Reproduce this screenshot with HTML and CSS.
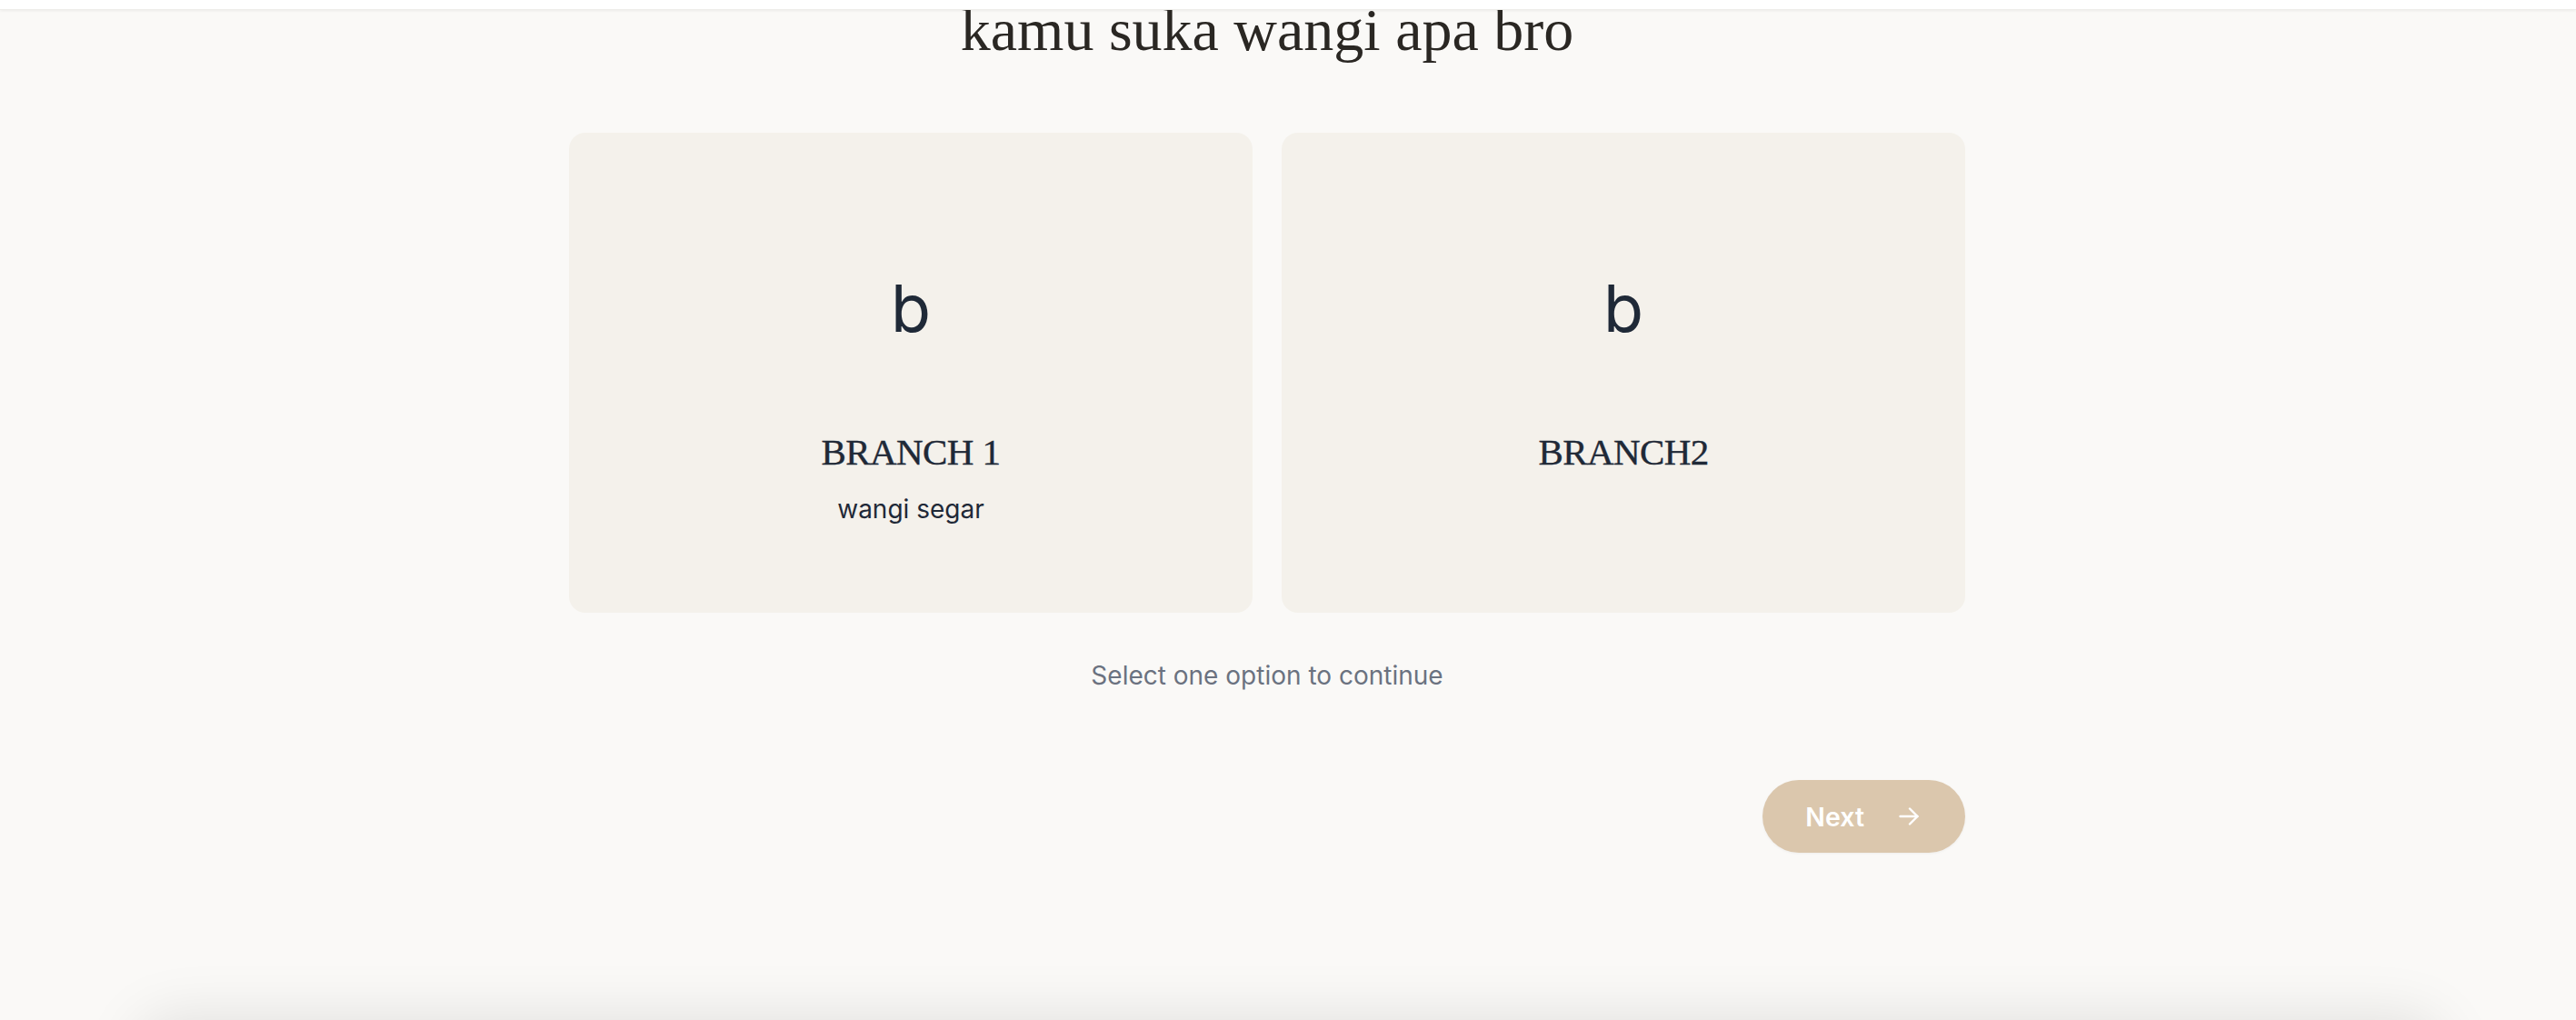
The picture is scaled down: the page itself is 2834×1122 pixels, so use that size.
FILE: index.html
```html
<!DOCTYPE html>
<html lang="id">
<head>
<meta charset="utf-8">
<title>Quiz</title>
<link rel="stylesheet" href="styles.css">
</head>
<body>
<header class="topbar"></header>
<div class="page">
  <main class="quiz">
    <h1 class="question">kamu suka wangi apa bro</h1>
    <div class="options">
      <button class="option" type="button">
        <span class="option-icon">b</span>
        <span class="option-name">BRANCH 1</span>
        <span class="option-desc">wangi segar</span>
      </button>
      <button class="option" type="button">
        <span class="option-icon">b</span>
        <span class="option-name">BRANCH2</span>
      </button>
    </div>
    <p class="hint">Select one option to continue</p>
    <div class="actions">
      <button class="next" type="button">
        <span>Next</span>
        <svg class="next-arrow" width="22" height="20" viewBox="0 0 22 20" fill="none" stroke="currentColor" stroke-width="2.4" stroke-linecap="round" stroke-linejoin="round"><path d="M1.5 10h19"/><path d="M12 1.5l8.5 8.5-8.5 8.5"/></svg>
      </button>
    </div>
  </main>
  <div class="below-panel"></div>
</div>
</body>
</html>
```

FILE: styles.css
```css
html, body {
  margin: 0;
  padding: 0;
}
body {
  background: #faf9f7;
  font-family: Inter, "Noto Sans", sans-serif;
  color: #1f2937;
  overflow: hidden;
}
.topbar {
  position: fixed;
  top: 0;
  left: 0;
  right: 0;
  height: 10px;
  background: #ffffff;
  box-shadow: 0 1px 3px rgba(0, 0, 0, 0.06);
  border-bottom: 1px solid #eeede9;
  z-index: 10;
}
.page {
  padding-right: 46px;
}
.quiz {
  width: 1536px;
  margin: 0 auto;
}
.question {
  margin: 0;
  font-family: "Liberation Serif", "Times New Roman", serif;
  font-weight: 400;
  font-size: 66px;
  line-height: 66px;
  color: #2a2723;
  text-align: center;
}
.options {
  margin-top: 80px;
  display: grid;
  grid-template-columns: 1fr 1fr;
  gap: 32px;
}
.option {
  height: 528px;
  box-sizing: border-box;
  padding: 157px 0 0;
  border: 0;
  border-radius: 18px;
  background: #f4f1eb;
  display: flex;
  flex-direction: column;
  align-items: center;
  font: inherit;
  color: #1f2937;
  cursor: pointer;
}
.option-icon {
  font-family: Inter, sans-serif;
  font-size: 72px;
  line-height: 72px;
}
.option-name {
  margin-top: 97px;
  font-family: "Liberation Serif", "Times New Roman", serif;
  font-size: 41px;
  line-height: 50px;
  letter-spacing: -0.6px;
  -webkit-text-stroke: 0.4px #1f2937;
}
.option-desc {
  margin-top: 18px;
  font-size: 28px;
  line-height: 40px;
}
.hint {
  margin: 49px 0 0;
  text-align: center;
  font-size: 28px;
  line-height: 40px;
  color: #6b7280;
}
.actions {
  margin-top: 95px;
  display: flex;
  justify-content: flex-end;
}
.next {
  height: 80px;
  box-sizing: border-box;
  padding: 0 51px 0 47px;
  border: 0;
  border-radius: 40px;
  background: #dbc7ad;
  color: #ffffff;
  font-family: Inter, sans-serif;
  font-size: 28.5px;
  font-weight: 600;
  display: flex;
  align-items: center;
  gap: 38px;
  box-shadow: 0 1px 3px rgba(0, 0, 0, 0.05);
  cursor: pointer;
}
.next-arrow {
  display: block;
}
.below-panel {
  margin: 188px 100px 0 150px;
  height: 400px;
  background: #faf9f7;
  border-radius: 40px;
  box-shadow: 0 -8px 64px rgba(0, 0, 0, 0.1);
}
```
